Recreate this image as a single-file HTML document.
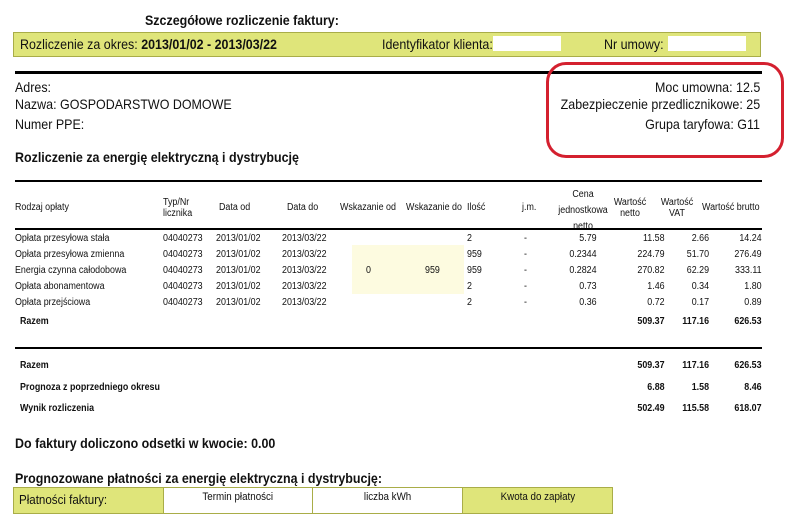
<!DOCTYPE html>
<html><head><meta charset="utf-8"><style>
body{margin:0;width:807px;height:507px;background:#fff;position:relative;overflow:hidden;font-family:"Liberation Sans",sans-serif;color:#111}
.a{position:absolute;white-space:nowrap;line-height:1;transform:scaleX(.89);transform-origin:left top}
.b{font-weight:bold}
.s{font-size:10px}
.m{font-size:14px}
.r{text-align:right;transform-origin:right top}
.c{text-align:center;transform-origin:center top}
.line{position:absolute;background:#000}
.t{display:inline-block;transform:scaleX(.89);white-space:nowrap}
</style></head><body>
<div class="a m b" style="left:145px;top:13px">Szczegółowe rozliczenie faktury:</div>
<div style="position:absolute;left:13px;top:32px;width:746px;height:23px;background:#dfe57a;border:1px solid #a9ad48"></div>
<div class="a m" style="left:20px;top:37px">Rozliczenie za okres: <b>2013/01/02 - 2013/03/22</b></div>
<div class="a m" style="left:382px;top:37px">Identyfikator klienta:</div>
<div style="position:absolute;left:493px;top:36px;width:68px;height:15px;background:#fff"></div>
<div class="a m" style="left:604px;top:37px">Nr umowy:</div>
<div style="position:absolute;left:668px;top:36px;width:78px;height:15px;background:#fff"></div>
<div class="line" style="left:15px;top:71px;width:747px;height:3px"></div>
<div class="a m" style="left:15px;top:80px">Adres:</div>
<div class="a m" style="left:15px;top:97px">Nazwa: GOSPODARSTWO DOMOWE</div>
<div class="a m" style="left:15px;top:117px">Numer PPE:</div>
<div class="a m r" style="right:47px;top:80px">Moc umowna: 12.5</div>
<div class="a m r" style="right:47px;top:97px">Zabezpieczenie przedlicznikowe: 25</div>
<div class="a m r" style="right:47px;top:117px">Grupa taryfowa: G11</div>
<div style="position:absolute;left:546px;top:62px;width:232px;height:90px;border:3px solid #d4202f;border-radius:20px"></div>
<div class="a m b" style="left:15px;top:150px">Rozliczenie za energię elektryczną i dystrybucję</div>
<div class="line" style="left:15px;top:180px;width:747px;height:2px"></div>
<div class="a s" style="left:15px;top:203px">Rodzaj opłaty</div>
<div class="a s" style="left:163px;top:197px;line-height:11px">Typ/Nr<br>licznika</div>
<div class="a s" style="left:219px;top:203px">Data od</div>
<div class="a s" style="left:287px;top:203px">Data do</div>
<div class="a s" style="left:340px;top:203px">Wskazanie od</div>
<div class="a s" style="left:406px;top:203px">Wskazanie do</div>
<div class="a s" style="left:467px;top:203px">Ilość</div>
<div class="a s" style="left:522px;top:203px">j.m.</div>
<div class="a s c" style="left:553px;width:60px;top:187px;line-height:16px">Cena<br>jednostkowa<br>netto</div>
<div class="a s c" style="left:610px;width:40px;top:197px;line-height:11px">Wartość<br>netto</div>
<div class="a s c" style="left:657px;width:40px;top:197px;line-height:11px">Wartość<br>VAT</div>
<div class="a s" style="left:702px;top:203px">Wartość brutto</div>
<div class="line" style="left:15px;top:228px;width:747px;height:2px"></div>
<div style="position:absolute;left:352px;top:245px;width:112px;height:49px;background:#fdfbe0"></div>
<div class="a s" style="left:15px;top:231px;line-height:16px">Opłata przesyłowa stała<br>Opłata przesyłowa zmienna<br>Energia czynna całodobowa<br>Opłata abonamentowa<br>Opłata przejściowa</div>
<div class="a s" style="left:163px;top:231px;line-height:16px">04040273<br>04040273<br>04040273<br>04040273<br>04040273</div>
<div class="a s" style="left:216px;top:231px;line-height:16px">2013/01/02<br>2013/01/02<br>2013/01/02<br>2013/01/02<br>2013/01/02</div>
<div class="a s" style="left:282px;top:231px;line-height:16px">2013/03/22<br>2013/03/22<br>2013/03/22<br>2013/03/22<br>2013/03/22</div>
<div class="a s" style="left:366px;top:263px;line-height:16px">0</div>
<div class="a s" style="left:425px;top:263px;line-height:16px">959</div>
<div class="a s" style="left:467px;top:231px;line-height:16px">2<br>959<br>959<br>2<br>2</div>
<div class="a s" style="left:524px;top:231px;line-height:16px">-<br>-<br>-<br>-<br>-</div>
<div class="a s r" style="right:210px;top:231px;line-height:16px">5.79<br>0.2344<br>0.2824<br>0.73<br>0.36</div>
<div class="a s r" style="right:142px;top:231px;line-height:16px">11.58<br>224.79<br>270.82<br>1.46<br>0.72</div>
<div class="a s r" style="right:98px;top:231px;line-height:16px">2.66<br>51.70<br>62.29<br>0.34<br>0.17</div>
<div class="a s r" style="right:45px;top:231px;line-height:16px">14.24<br>276.49<br>333.11<br>1.80<br>0.89</div>
<div class="a s b" style="left:20px;top:317px">Razem</div>
<div class="a s b r" style="right:142px;top:317px">509.37</div>
<div class="a s b r" style="right:98px;top:317px">117.16</div>
<div class="a s b r" style="right:45px;top:317px">626.53</div>
<div class="line" style="left:15px;top:347px;width:747px;height:2px"></div>
<div class="a s b" style="left:20px;top:355px;line-height:21.5px">Razem<br>Prognoza z poprzedniego okresu<br>Wynik rozliczenia</div>
<div class="a s b r" style="right:142px;top:355px;line-height:21.5px">509.37<br>6.88<br>502.49</div>
<div class="a s b r" style="right:98px;top:355px;line-height:21.5px">117.16<br>1.58<br>115.58</div>
<div class="a s b r" style="right:45px;top:355px;line-height:21.5px">626.53<br>8.46<br>618.07</div>
<div class="a m b" style="left:15px;top:436px">Do faktury doliczono odsetki w kwocie: 0.00</div>
<div class="a m b" style="left:15px;top:471px">Prognozowane płatności za energię elektryczną i dystrybucję:</div>
<div style="position:absolute;left:13px;top:487px;width:598px;height:25px;border:1px solid #a9ad48;display:flex;font-size:11px">
<div style="width:150px;background:#dfe57a;border-right:1px solid #a9ad48;padding:4px 0 0 5px;box-sizing:border-box;font-size:13px"><span class="t" style="transform-origin:left">Płatności faktury:</span></div>
<div style="width:149px;background:#fff;border-right:1px solid #a9ad48;text-align:center;padding-top:3px;box-sizing:border-box"><span class="t">Termin płatności</span></div>
<div style="width:150px;background:#fff;border-right:1px solid #a9ad48;text-align:center;padding-top:3px;box-sizing:border-box"><span class="t">liczba kWh</span></div>
<div style="flex:1;background:#dfe57a;text-align:center;padding-top:3px;box-sizing:border-box"><span class="t">Kwota do zapłaty</span></div>
</div>
</body></html>
